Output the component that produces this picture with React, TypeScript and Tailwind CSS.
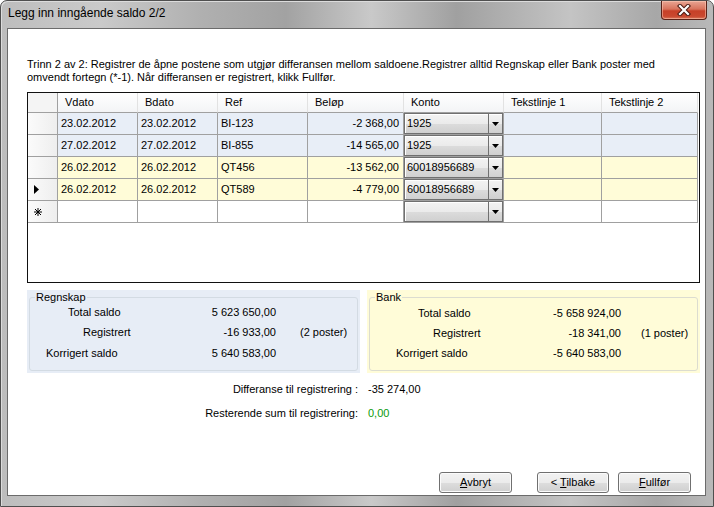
import React from "react";

type Row = {
  vdato: string;
  bdato: string;
  ref: string;
  belop: string;
  konto: string;
  bg: string;
  current?: boolean;
};

const rows: Row[] = [
  { vdato: "23.02.2012", bdato: "23.02.2012", ref: "BI-123", belop: "-2 368,00", konto: "1925", bg: "bg-[#e8eef7]" },
  { vdato: "27.02.2012", bdato: "27.02.2012", ref: "BI-855", belop: "-14 565,00", konto: "1925", bg: "bg-[#e8eef7]" },
  { vdato: "26.02.2012", bdato: "26.02.2012", ref: "QT456", belop: "-13 562,00", konto: "60018956689", bg: "bg-[#fffcd8]" },
  { vdato: "26.02.2012", bdato: "26.02.2012", ref: "QT589", belop: "-4 779,00", konto: "60018956689", bg: "bg-[#fffcd8]", current: true },
];

const Combo = ({ value }: { value: string }) => (
  <div className="flex h-full w-full border border-[#707070] bg-[linear-gradient(#f3f3f3_0%,#ebebeb_50%,#dcdcdc_51%,#d0d0d0_100%)] shadow-[inset_1px_1px_0_#fff]">
    <div className="flex-1 pl-[2px] leading-[19px]">{value}</div>
    <div className="flex w-[14px] items-center justify-center border-l border-[#707070]">
      <svg width="7" height="4" viewBox="0 0 7 4">
        <path d="M0 0H7L3.5 4Z" fill="#000" />
      </svg>
    </div>
  </div>
);

const RowHeader = ({ kind }: { kind?: "current" | "new" }) => (
  <div className="flex w-[30px] items-center justify-center border-r border-b border-[#a0a0a0] bg-[linear-gradient(to_right,#fbfbfb,#eeeeee)]">
    {kind === "current" && (
      <svg width="5" height="9" viewBox="0 0 5 9" className="mr-[12px]">
        <path d="M0 0L5 4.5L0 9Z" fill="#000" />
      </svg>
    )}
    {kind === "new" && (
      <svg width="8" height="8" viewBox="0 0 8 8" className="mr-[10px]">
        <path d="M4 0V8M0 4H8M1 1L7 7M7 1L1 7" stroke="#000" strokeWidth="1" />
      </svg>
    )}
  </div>
);

const headers = [
  { label: "Vdato", w: "w-[80px]" },
  { label: "Bdato", w: "w-[80px]" },
  { label: "Ref", w: "w-[90px]" },
  { label: "Beløp", w: "w-[96px]" },
  { label: "Konto", w: "w-[100px]" },
  { label: "Tekstlinje 1", w: "w-[98px]" },
  { label: "Tekstlinje 2", w: "w-[96px]" },
];

const Button = ({ children, w }: { children: React.ReactNode; w: string }) => (
  <button className={`${w} h-[21px] rounded-[3px] border border-[#707070] bg-[linear-gradient(#f2f2f2_0%,#ebebeb_50%,#dddddd_51%,#cfcfcf_100%)] text-center leading-[19px] text-black shadow-[inset_0_0_0_1px_#fbfbfb]`}>
    {children}
  </button>
);

export default function App() {
  return (
    <div className="h-[507px] w-[714px] bg-white font-['Liberation_Sans',Arial,sans-serif] text-[11px] text-black">
      <div className="flex h-full flex-col rounded-t-[7px] border border-[#4f4f4f] bg-[linear-gradient(to_right,#bdbdbd_0%,#cacaca_14%,#b0b0b0_28%,#a2a2a2_40%,#c9c9c9_52%,#a0a0a0_64%,#c4c4c4_80%,#a7a7a7_92%,#b9b9b9_100%)] pr-[7px] pb-[10px] pl-[6px] shadow-[inset_1px_1px_0_#dcdcdc]">
        {/* title bar */}
        <div className="flex h-[27px] items-start">
          <div className="pt-[5px] pl-[1px] text-[12px] leading-[15px] text-black">Legg inn inngående saldo 2/2</div>
          <div className="ml-auto mr-[-1px] flex h-[19px] w-[46px] items-center justify-center rounded-b-[4px] border border-t-0 border-[#5a2218] bg-[linear-gradient(#e9a593_0%,#d8735c_45%,#c74028_55%,#c9482f_85%,#d9785c_100%)] shadow-[inset_0_0_0_1px_rgba(255,210,190,0.5)]">
            <svg width="14" height="12" viewBox="0 0 14 12">
              <path d="M3 2L11 10M11 2L3 10" stroke="#4a1a12" strokeWidth="4.2" strokeLinecap="square" />
              <path d="M3 2L11 10M11 2L3 10" stroke="#fff" strokeWidth="2.2" strokeLinecap="square" />
            </svg>
          </div>
        </div>

        {/* client */}
        <div className="flex flex-1 flex-col border border-[#6b6b6b] bg-white pt-[29px] pl-[19px]">
          <p className="w-[660px] leading-[13px]">
            Trinn 2 av 2: Registrer de åpne postene som utgjør differansen mellom saldoene.Registrer alltid Regnskap eller Bank poster med omvendt fortegn (*-1). Når differansen er registrert, klikk Fullfør.
          </p>

          {/* grid */}
          <div className="mt-[8px] flex h-[191px] w-[673px] flex-col border border-[#111]">
            <div className="flex h-[20px]">
              <div className="w-[30px] border-r border-b border-[#a0a0a0] bg-[#f4f4f4]" />
              {headers.map((h) => (
                <div
                  key={h.label}
                  className={`${h.w} border-r border-b border-r-[#e2e2e2] border-b-[#a0a0a0] bg-[linear-gradient(#ffffff,#f3f4f6)] pl-[7px] leading-[19px]`}
                >
                  {h.label}
                </div>
              ))}
            </div>
            {rows.map((r, i) => (
              <div key={i} className="flex h-[22px]">
                <RowHeader kind={r.current ? "current" : undefined} />
                <div className={`w-[80px] border-r border-b border-[#a0a0a0] ${r.bg} pl-[3px] leading-[21px]`}>{r.vdato}</div>
                <div className={`w-[80px] border-r border-b border-[#a0a0a0] ${r.bg} pl-[3px] leading-[21px]`}>{r.bdato}</div>
                <div className={`w-[90px] border-r border-b border-[#a0a0a0] ${r.bg} pl-[3px] leading-[21px]`}>{r.ref}</div>
                <div className={`w-[96px] border-r border-b border-[#a0a0a0] ${r.bg} pr-[4px] text-right leading-[21px]`}>{r.belop}</div>
                <div className={`w-[100px] border-r border-b border-[#a0a0a0] ${r.bg}`}>
                  <Combo value={r.konto} />
                </div>
                <div className={`w-[98px] border-r border-b border-[#a0a0a0] ${r.bg}`} />
                <div className={`w-[96px] border-r border-b border-[#a0a0a0] ${r.bg}`} />
              </div>
            ))}
            <div className="flex h-[22px]">
              <RowHeader kind="new" />
              <div className="w-[80px] border-r border-b border-[#a0a0a0]" />
              <div className="w-[80px] border-r border-b border-[#a0a0a0]" />
              <div className="w-[90px] border-r border-b border-[#a0a0a0]" />
              <div className="w-[96px] border-r border-b border-[#a0a0a0]" />
              <div className="w-[100px] border-r border-b border-[#a0a0a0]">
                <Combo value="" />
              </div>
              <div className="w-[98px] border-r border-b border-[#a0a0a0]" />
              <div className="w-[96px] border-r border-b border-[#a0a0a0]" />
            </div>
          </div>

          {/* summary panels */}
          <div className="mt-[7px] flex w-[673px] gap-[7px]">
            <div className="h-[83px] w-[333px] bg-[#e7edf6] px-[2px] pt-[1px]">
              <fieldset className="h-[80px] rounded-[3px] border border-[#d3dbe3]">
                <legend className="ml-[5px] px-[1px] leading-[13px]">Regnskap</legend>
                <div className="flex h-[16px] items-center">
                  <div className="flex w-[246px] justify-between">
                    <span className="pl-[38px]">Total saldo</span>
                    <span>5 623 650,00</span>
                  </div>
                </div>
                <div className="mt-[4px] flex h-[16px] items-center">
                  <div className="flex w-[246px] justify-between">
                    <span className="pl-[53px]">Registrert</span>
                    <span>-16 933,00</span>
                  </div>
                  <span className="ml-[24px]">(2 poster)</span>
                </div>
                <div className="mt-[5px] flex h-[16px] items-center">
                  <div className="flex w-[246px] justify-between">
                    <span className="pl-[16px]">Korrigert saldo</span>
                    <span>5 640 583,00</span>
                  </div>
                </div>
              </fieldset>
            </div>
            <div className="h-[83px] w-[333px] bg-[#fffcd8] px-[2px] pt-[1px]">
              <fieldset className="h-[80px] rounded-[3px] border border-[#dcdcd0]">
                <legend className="ml-[5px] px-[1px] leading-[13px]">Bank</legend>
                <div className="mt-[1px] flex h-[16px] items-center">
                  <div className="flex w-[251px] justify-between">
                    <span className="pl-[48px]">Total saldo</span>
                    <span>-5 658 924,00</span>
                  </div>
                </div>
                <div className="mt-[4px] flex h-[16px] items-center">
                  <div className="flex w-[251px] justify-between">
                    <span className="pl-[63px]">Registrert</span>
                    <span>-18 341,00</span>
                  </div>
                  <span className="ml-[20px]">(1 poster)</span>
                </div>
                <div className="mt-[4px] flex h-[16px] items-center">
                  <div className="flex w-[251px] justify-between">
                    <span className="pl-[26px]">Korrigert saldo</span>
                    <span>-5 640 583,00</span>
                  </div>
                </div>
              </fieldset>
            </div>
          </div>

          {/* differanse */}
          <div className="mt-[4px] flex h-[24px] items-center">
            <span className="w-[331px] text-right">Differanse til registrering :</span>
            <span className="ml-[10px]">-35 274,00</span>
          </div>
          <div className="flex h-[24px] items-center">
            <span className="w-[331px] text-right">Resterende sum til registrering:</span>
            <span className="ml-[10px] text-[#0a9a0a]">0,00</span>
          </div>

          {/* buttons */}
          <div className="mt-[47px] flex">
            <div className="ml-[412px]">
              <Button w="w-[73px]">
                <u>A</u>vbryt
              </Button>
            </div>
            <div className="ml-[25px]">
              <Button w="w-[72px]">
                &lt; <u>T</u>ilbake
              </Button>
            </div>
            <div className="ml-[9px]">
              <Button w="w-[73px]">
                <u>F</u>ullfør
              </Button>
            </div>
          </div>
        </div>
      </div>
    </div>
  );
}
